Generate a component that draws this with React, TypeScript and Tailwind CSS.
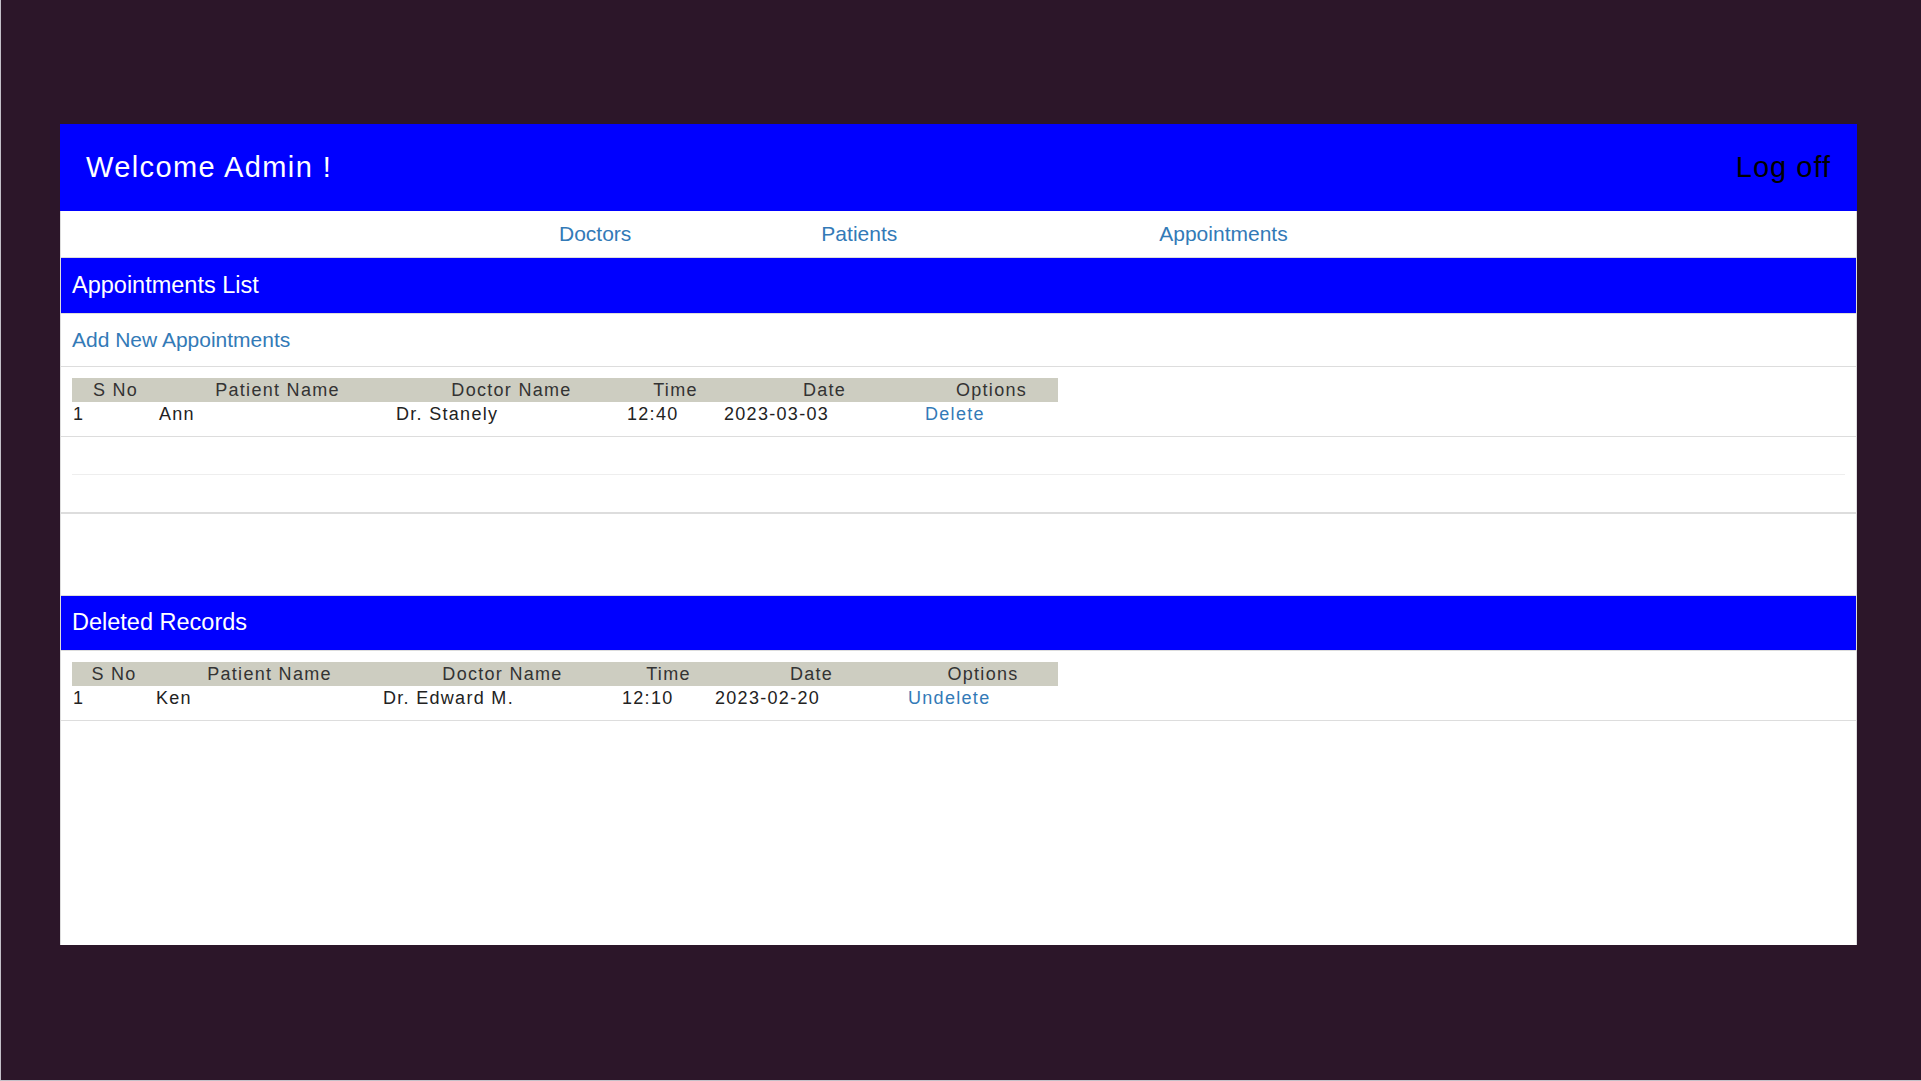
const font = { fontFamily: '"Liberation Sans", Arial, sans-serif' };

interface Row {
  no: number;
  patient: string;
  doctor: string;
  time: string;
  date: string;
  action: string;
}

const heads = ["S No", "Patient Name", "Doctor Name", "Time", "Date", "Options"];

const RecordTable = ({ row, cols }: { row: Row; cols: string }) => (
  <div className="ml-[11px] w-fit text-[18px] leading-[24px] tracking-[1.3px]">
    <div className={`grid ${cols} bg-[#cdcdc1] text-[#333]`}>
      {heads.map((h) => (
        <div key={h} className="text-center">{h}</div>
      ))}
    </div>
    <div className={`grid ${cols} text-[#222]`}>
      <div className="pl-[1px]">{row.no}</div>
      <div>{row.patient}</div>
      <div>{row.doctor}</div>
      <div>{row.time}</div>
      <div>{row.date}</div>
      <div className="text-[#337ab7]">{row.action}</div>
    </div>
  </div>
);

const SectionBar = ({ title, h }: { title: string; h: string }) => (
  <div className={`${h} border-y border-[#ddd] bg-[#0000ff] flex items-center pl-[11px] text-[23.5px] text-white`}>
    {title}
  </div>
);

export default function App() {
  return (
    <div
      className="h-screen w-full bg-[#2c1629] pt-[124px] pl-[59px] pr-[64px] border-l border-b border-[#c4c0c8]"
      style={font}
    >
      <div className="flex flex-col">
        <div className="h-[87px] bg-[#0000ff] flex items-center justify-between px-[26px] text-[29px] tracking-[1.4px]">
          <span className="text-white">Welcome Admin !</span>
          <span className="text-black tracking-[1px]">Log off</span>
        </div>

        <div className="h-[734px] bg-white border-x border-[#ddd] flex flex-col">
          <div className="h-[46px] flex items-center text-[21px] text-[#337ab7]">
            <span className="ml-[498px]">Doctors</span>
            <span className="ml-[190px]">Patients</span>
            <span className="ml-[262px]">Appointments</span>
          </div>

          <SectionBar title="Appointments List" h="h-[57px]" />
          <div className="h-[53px] border-b border-[#ddd] flex items-center pl-[11px] text-[21px] text-[#337ab7]">
            Add New Appointments
          </div>
          <div className="pt-[11px] pb-[10px] border-b border-[#ddd]">
            <RecordTable
              cols="grid-cols-[87px_237px_231px_97px_201px_133px]"
              row={{ no: 1, patient: "Ann", doctor: "Dr. Stanely", time: "12:40", date: "2023-03-03", action: "Delete" }}
            />
          </div>
          <div className="h-[38px] mx-[11px] border-b border-[#eee]" />
          <div className="h-[39px] border-b-2 border-[#ddd]" />

          <div className="h-[81px]" />

          <SectionBar title="Deleted Records" h="h-[56px]" />
          <div className="pt-[11px] pb-[10px] border-b border-[#ddd]">
            <RecordTable
              cols="grid-cols-[84px_227px_239px_93px_193px_150px]"
              row={{ no: 1, patient: "Ken", doctor: "Dr. Edward M.", time: "12:10", date: "2023-02-20", action: "Undelete" }}
            />
          </div>
        </div>
      </div>
    </div>
  );
}
